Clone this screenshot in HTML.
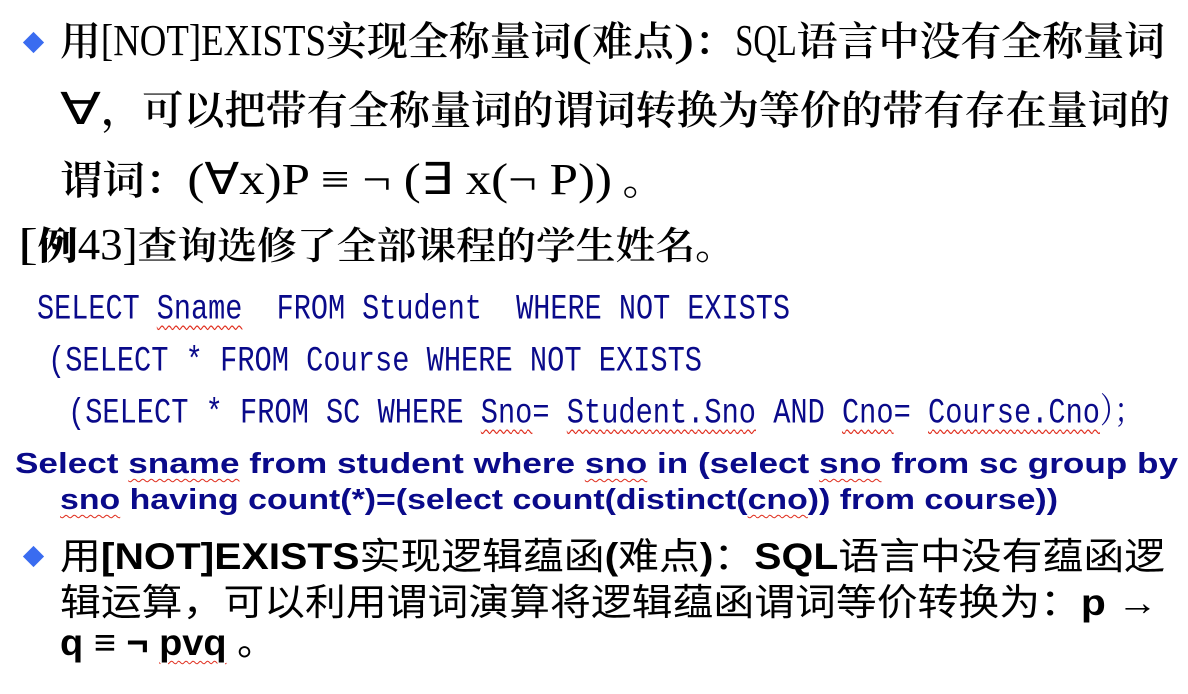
<!DOCTYPE html>
<html><head><meta charset="utf-8">
<style>
body{margin:0;width:1188px;height:694px;background:#fff;overflow:hidden;position:relative}
.l{position:absolute;white-space:nowrap;transform-origin:0 50%;color:#000}
.c{font-family:"Liberation Serif","Noto Serif CJK SC",serif;font-weight:600}
.m{font-family:"Liberation Serif",serif;font-size:44px;font-weight:normal}
.m i{font-style:normal;display:inline-block;transform-origin:0 50%;font-weight:normal}
.q{font-family:"Liberation Mono","Noto Serif CJK SC",monospace;color:#0a0a8a;font-size:28.5px;height:40px;line-height:40px;white-space:pre}
.a{font-family:"Liberation Sans",sans-serif;font-weight:bold;color:#0a0a8a;font-size:29px;height:36px;line-height:36px}
.w{text-decoration:underline wavy #e03020;text-decoration-thickness:1px;text-underline-offset:5px}
.d{position:absolute;width:15px;height:15px;background:#3a6cf0;transform:rotate(45deg)}
.b{font-family:"Liberation Sans","Noto Sans CJK SC",sans-serif;font-size:37px;height:44px;line-height:44px}
.b b{font-family:"Liberation Sans",sans-serif}
</style></head><body>
<div class="d" style="left:26px;top:35px"></div>
<div class="l c" id="l1" style="left:60px;top:18px;font-size:40px;height:46px;line-height:46px">用<span class="m">[NOT]EXISTS</span>实现全称量词<span class="m">(</span>难点<span class="m">)</span>：<span class="m">SQL</span>语言中没有全称量词</div>
<div class="l c" id="l2" style="left:60px;top:87px;font-size:40px;height:46px;line-height:46px"><span class="m">∀ </span>，可以把带有全称量词的谓词转换为等价的带有存在量词的</div>
<div class="l c" id="l3" style="left:60px;top:157px;font-size:40px;height:46px;line-height:46px">谓词：<span class="m">(∀x)P ≡ ¬ (∃ x(¬ P))</span> 。</div>
<div class="l c" id="l4" style="left:18px;top:222px;font-size:38px;height:46px;line-height:46px"><span class="m">[</span><b>例</b><span class="m">43]</span>查询选修了全部课程的学生姓名。</div>
<div class="l q" id="s1" style="left:37px;top:290px">SELECT <span class="w">Sname</span>  FROM Student  WHERE NOT EXISTS</div>
<div class="l q" id="s2" style="left:48px;top:342px">(SELECT * FROM Course WHERE NOT EXISTS</div>
<div class="l q" id="s3" style="left:68px;top:394px">(SELECT * FROM SC WHERE <span class="w">Sno</span>= <span class="w">Student.Sno</span> AND <span class="w">Cno</span>= <span class="w">Course.Cno</span>）；</div>
<div class="l a" id="a1" style="left:15px;top:446px">Select <span class="w">sname</span> from student where <span class="w">sno</span> in (select <span class="w">sno</span> from sc group by</div>
<div class="l a" id="a2" style="left:60px;top:482px"><span class="w">sno</span> having count(*)=(select count(distinct(<span class="w">cno</span>)) from course))</div>
<div class="d" style="left:26px;top:549px"></div>
<div class="l b" id="b1" style="left:60px;top:535px">用<b>[NOT]EXISTS</b>实现逻辑蕴函<b>(</b>难点<b>)</b>：<b>SQL</b>语言中没有蕴函逻</div>
<div class="l b" id="b2" style="left:60px;top:581px">辑运算，可以利用谓词演算将逻辑蕴函谓词等价转换为：<b>p →</b></div>
<div class="l b" id="b3" style="left:60px;top:621px"><b>q ≡ ¬ <span class="w">pvq</span></b> 。</div>
<script>
var ms=document.querySelectorAll('.m');
for(var i=0;i<ms.length;i++){var e=ms[i];var fs=parseFloat(getComputedStyle(e.parentNode).fontSize);
var n=e.textContent.length;var tw=n*fs/2;e.innerHTML='<i>'+e.innerHTML+'</i>';var ii=e.firstChild;
var w=ii.getBoundingClientRect().width;e.style.display='inline-block';e.style.width=tw+'px';
if(w>0)ii.style.transform='scaleX('+(tw/w)+')';}
var t={l1:1105,l2:1110,l3:605,l4:717,s1:753,s2:654,s3:1075,a1:1163,a2:998,b1:1105,b2:1098,b3:215};
for(var k in t){var e=document.getElementById(k);var w=e.getBoundingClientRect().width;
var sy=e.className.indexOf(' q')>=0?' scaleY(1.22)':'';
if(w>0)e.style.transform='scaleX('+(t[k]/w)+')'+sy;}
</script>
</body></html>
